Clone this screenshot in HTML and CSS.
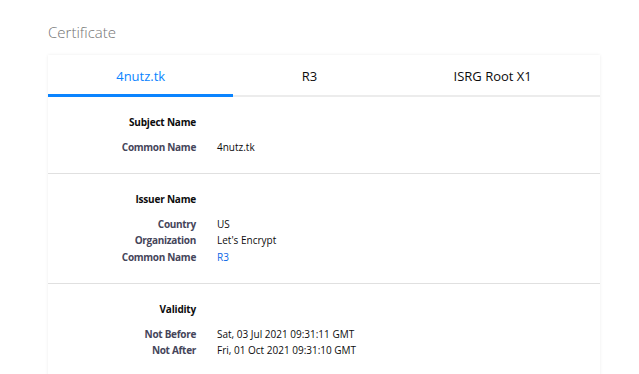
FILE: index.html
```html
<!DOCTYPE html>
<html lang="en">
<head>
    <meta charset="UTF-8">
    <meta name="viewport" content="width=device-width, initial-scale=1.0">
    <title>Certificate</title>
    <link rel="stylesheet" href="styles.css">
</head>
<body>
    <div class="page">
        <h1 class="title">Certificate</h1>
        <div class="card">
            <div class="tabs">
                <div class="tab selected">4nutz.tk</div>
                <div class="tab">R3</div>
                <div class="tab">ISRG Root X1</div>
            </div>

            <div class="info-group">
                <div class="group-title">Subject Name</div>
                <div class="row"><span class="label">Common Name</span><span class="value">4nutz.tk</span></div>
            </div>

            <div class="info-group">
                <div class="group-title">Issuer Name</div>
                <div class="row"><span class="label">Country</span><span class="value">US</span></div>
                <div class="row"><span class="label">Organization</span><span class="value">Let's Encrypt</span></div>
                <div class="row"><span class="label">Common Name</span><a class="value link" href="#">R3</a></div>
            </div>

            <div class="info-group">
                <div class="group-title">Validity</div>
                <div class="row"><span class="label">Not Before</span><span class="value">Sat, 03 Jul 2021 09:31:11 GMT</span></div>
                <div class="row"><span class="label">Not After</span><span class="value">Fri, 01 Oct 2021 09:31:10 GMT</span></div>
            </div>
        </div>
    </div>
</body>
</html>
```

FILE: styles.css
```css
body {
    margin: 0;
    background-color: #fff;
    font-family: "Open Sans", "Noto Sans", sans-serif;
    color: #0c0c0d;
}

.page {
    padding: 22px 39px 0 48px;
}

.title {
    margin: 0 0 13px;
    font-size: 15px;
    line-height: 20px;
    font-weight: 300;
    color: #737373;
}

.card {
    width: 552px;
    background-color: #fff;
    box-shadow: 0 0 3px rgba(0, 0, 0, 0.08);
}

.tabs {
    display: flex;
    border-bottom: 2px solid #ececec;
}

.tab {
    flex: 1 1 auto;
    text-align: center;
    height: 39px;
    line-height: 42px;
    font-size: 13px;
    border-bottom: 3px solid transparent;
    margin-bottom: -2px;
}

.tab.selected {
    color: #0a84ff;
    border-bottom-color: #0a84ff;
}

.info-group {
    padding: 17px 0 18px;
    border-bottom: 1px solid #e0e0e0;
    font-size: 10px;
    line-height: 16.5px;
}

.group-title {
    width: 148px;
    text-align: right;
    font-weight: 700;
    letter-spacing: -0.2px;
    margin-bottom: 8px;
}

.row {
    display: grid;
    grid-template-columns: 148px auto;
    column-gap: 21px;
}

.label {
    text-align: right;
    font-weight: 700;
    letter-spacing: -0.3px;
    color: #45455a;
}

.value {
    color: #0c0c0d;
}

.link {
    color: #0a66e6;
    text-decoration: none;
}
```
